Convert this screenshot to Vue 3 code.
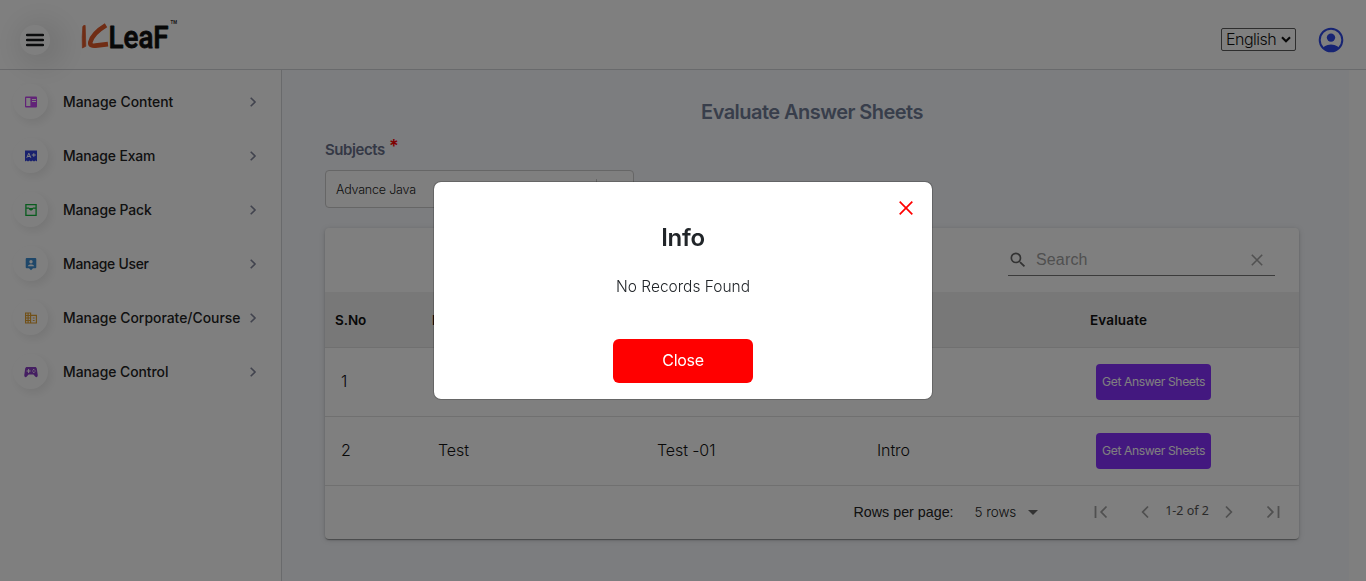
<script setup>
import { ref } from 'vue'

const menu = [
  { label: 'Manage Content', icon: 'content', color: '#c447f0', ls: '0.02px' },
  { label: 'Manage Exam', icon: 'exam', color: '#3243dc', ls: '-0.12px' },
  { label: 'Manage Pack', icon: 'pack', color: '#13b83c', ls: '-0.1px' },
  { label: 'Manage User', icon: 'user', color: '#3f8fd2', ls: '-0.26px' },
  { label: 'Manage Corporate/Course', icon: 'corporate', color: '#e2a02e', ls: '0px' },
  { label: 'Manage Control', icon: 'control', color: '#8b3fc4', ls: '-0.04px' },
]

const rows = [
  { no: 1, name: 'Test', exam: 'Test -01', chapter: 'Intro' },
  { no: 2, name: 'Test', exam: 'Test -01', chapter: 'Intro' },
]

const open = ref(true)
</script>

<template>
  <div class="app">
    <header class="topbar">
      <button class="burger" aria-label="Menu">
        <svg width="18" height="14" viewBox="0 0 18 14"><path d="M1 2h16M1 7h16M1 12h16" stroke="#17191b" stroke-width="2.400" stroke-linecap="round" /></svg>
      </button>
      <svg class="logo" width="100" height="40" viewBox="0 0 100 40">
        <path d="M3.800 11.500Q4.600 10.200 6.200 10.400L6.800 31.300L3.400 33Q2.800 22 3.800 11.500Z" fill="#e05a2b" stroke="#e05a2b" stroke-width=".7" />
        <path d="M27 10.300C20 14.500 13 20.500 11.300 27.300C10.800 30.300 13.500 31 16.500 30.600L29 29.100" fill="none" stroke="#e05a2b" stroke-width="4.600" />
        <text class="logo-text" x="29.600" y="33" textLength="60" lengthAdjust="spacingAndGlyphs">LeaF</text>
        <text class="logo-tm" x="91.500" y="9" textLength="6.500" lengthAdjust="spacingAndGlyphs">TM</text>
      </svg>
      <div class="lang">
        <span>English</span>
        <svg width="10" height="7" viewBox="0 0 10 7"><path d="M1 1.200l4 4 4-4" fill="none" stroke="#111" stroke-width="2.100" /></svg>
      </div>
      <svg class="avatar" width="26" height="26" viewBox="0 0 26 26">
        <defs><clipPath id="face"><circle cx="13" cy="13" r="11.500" /></clipPath></defs>
        <g fill="#2f49e6">
          <circle cx="13" cy="10.600" r="4.200" />
          <ellipse cx="13" cy="24" rx="9" ry="6.600" clip-path="url(#face)" />
        </g>
        <circle cx="13" cy="13" r="11.300" fill="none" stroke="#2f49e6" stroke-width="2" />
      </svg>
    </header>

    <div class="body">
      <nav class="side">
        <a v-for="m in menu" :key="m.label" class="item">
          <span class="bubble">
            <svg width="14" height="14" viewBox="0 0 14 14" :style="{ color: m.color }">
              <g v-if="m.icon === 'content'">
                <path fill="currentColor" fill-rule="evenodd" d="M2 1.500h10a1 1 0 0 1 1 1v9a1 1 0 0 1-1 1H2a1 1 0 0 1-1-1v-9a1 1 0 0 1 1-1zM2.200 3v8h4.200V3zM8 4v1h4V4zM8 6v1h4V6z" />
              </g>
              <g v-else-if="m.icon === 'exam'">
                <path fill="currentColor" d="M1 1.500h12v11l-1.500-1-1.500 1-1.500-1-1.500 1-1.500-1-1.500 1-1.500-1-1.500 1z" />
                <path fill="none" stroke="#fff" d="M2.800 8.800l2-4.600 2 4.600M3.500 7.500h2.700M7.800 6h4M9.800 4.200v3.600" />
              </g>
              <g v-else-if="m.icon === 'pack'" fill="none" stroke="currentColor" stroke-width="1.300">
                <path d="M1.900 1.700h10.200v10.700H1.900z" />
                <path d="M2 5.200h3.200M8.800 5.200H12" />
                <path fill="currentColor" stroke="none" d="M5 5h4v1.400L7 7.800 5 6.400z" />
              </g>
              <g v-else-if="m.icon === 'user'">
                <path fill="currentColor" fill-rule="evenodd" d="M2.700 1h8.600a1 1 0 0 1 1 1v8.300a1 1 0 0 1-1 1H9l-2 2-2-2H2.700a1 1 0 0 1-1-1V2a1 1 0 0 1 1-1zM7 3a1.700 1.700 0 1 0 0 3.400A1.700 1.700 0 0 0 7 3zM3.800 9.300h6.400C9.800 6.900 4.200 6.900 3.800 9.300z" />
              </g>
              <g v-else-if="m.icon === 'corporate'" fill="none" stroke="currentColor" stroke-width="1.150">
                <path d="M1.600 2h5v10h-5zM6.600 4.400h5.800V12H6.600M1.600 4.500h5M1.600 7h5M1.600 9.500h5M4.100 2v10M8.800 7h1.800M8.800 9.500h1.800" />
              </g>
              <g v-else>
                <path fill="currentColor" d="M3 2h8c1 0 1.600.6 1.800 1.500l.9 6.200c.3 2.600-1.500 3-2.500 1.800L9.400 9.600H4.600l-1.800 1.900C1.800 12.700 0 12.300.3 9.700l.9-6.200C1.400 2.600 2 2 3 2z" />
                <path stroke="#fff" stroke-width="1" d="M2.600 6h4M4.600 4v4" />
                <path fill="#fff" d="M9.200 4h1.100v1.100H9.200zM8.200 5.500h1.100v1.100H8.200zM10.500 5.500h1.100v1.100h-1.100zM9.300 7h1.100v1.100H9.300z" />
              </g>
            </svg>
          </span>
          <span class="label" :style="{ letterSpacing: m.ls }">{{ m.label }}</span>
          <svg class="chev" width="8" height="12" viewBox="0 0 8 12"><path d="M1.700 1.700L6 6l-4.300 4.300" fill="none" stroke="#83879c" stroke-width="1.600" /></svg>
        </a>
      </nav>

      <main class="main">
        <h1 class="title">Evaluate Answer Sheets</h1>
        <label class="field-label">Subjects <sup>*</sup></label>
        <div class="select">
          <span>Advance Java</span>
          <i class="divider"></i>
        </div>

        <section class="card">
          <div class="toolbar">
            <div class="search">
              <svg width="20" height="20" viewBox="0 0 24 24"><path fill="#666" d="M15.500 14h-.79l-.28-.27A6.470 6.470 0 0 0 16 9.500 6.500 6.500 0 1 0 9.500 16c1.610 0 3.090-.59 4.230-1.570l.27.280v.79l5 4.990L20.490 19l-4.990-5zm-6 0C7.010 14 5 11.990 5 9.500S7.010 5 9.500 5 14 7.010 14 9.500 11.990 14 9.500 14z" /></svg>
              <span class="ph">Search</span>
              <svg width="12" height="12" viewBox="0 0 12 12"><path d="M.8.8l10.400 10.400M11.200.8L.8 11.200" stroke="#a2a2a2" stroke-width="1.600" /></svg>
            </div>
          </div>
          <div class="row head">
            <span>S.No</span><span>Exam Name</span><span>Test Name</span><span>Chapter</span><span class="wide">Evaluate</span>
          </div>
          <div v-for="r in rows" :key="r.no" class="row">
            <span>{{ r.no }}</span>
            <span>{{ r.name }}</span>
            <span>{{ r.exam }}</span>
            <span>{{ r.chapter }}</span>
            <button class="get">Get Answer Sheets</button>
          </div>
          <footer class="pager">
            <span class="rpp">Rows per page:</span>
            <span class="count">5 rows</span>
            <svg class="caret" width="10" height="5" viewBox="0 0 10 5"><path d="M0 0h10L5 5z" fill="#666" /></svg>
            <svg class="first" width="14" height="14" viewBox="0 0 14 14"><path d="M1.500 1v12M12.500 1.500L7.200 7l5.300 5.500" fill="none" stroke="#a0a0a0" stroke-width="1.800" /></svg>
            <svg class="prev" width="8" height="14" viewBox="0 0 8 14"><path d="M7 1.500L1.700 7 7 12.500" fill="none" stroke="#a0a0a0" stroke-width="1.800" /></svg>
            <span class="range">1-2 of 2</span>
            <svg class="next" width="8" height="14" viewBox="0 0 8 14"><path d="M1 1.500L6.300 7 1 12.500" fill="none" stroke="#a0a0a0" stroke-width="1.800" /></svg>
            <svg class="last" width="14" height="14" viewBox="0 0 14 14"><path d="M12.500 1v12M1.500 1.500L6.800 7 1.500 12.500" fill="none" stroke="#a0a0a0" stroke-width="1.800" /></svg>
          </footer>
        </section>
      </main>
    </div>

    <div v-if="open" class="overlay">
      <div class="modal" role="dialog">
        <button class="x" aria-label="Close dialog" @click="open = false">
          <svg width="14" height="14" viewBox="0 0 14 14"><path d="M.7.7l12.600 12.600M13.300.7L.7 13.300" stroke="#f00" stroke-width="1.700" /></svg>
        </button>
        <h2>Info</h2>
        <p>No Records Found</p>
        <button class="close" @click="open = false">Close</button>
      </div>
    </div>
  </div>
</template>

<style>
body { overflow: hidden; }
</style>

<style scoped>
* { box-sizing: border-box; }
button { border: 0; padding: 0; font-family: inherit; cursor: pointer; }
svg { display: block; flex: none; }
.app { height: 581px; display: flex; flex-direction: column; background: #fff; font-family: Inter, "Open Sans", sans-serif; color: #111; overflow: hidden; }

.topbar { height: 70px; flex: none; display: flex; align-items: center; border-bottom: 1px solid #d3d4d8; padding: 10px 22px 0 20px; }
.burger { width: 30px; height: 30px; border-radius: 50%; background: #fff; display: flex; align-items: center; justify-content: center; box-shadow: 6px 4px 30px 8px rgba(0, 0, 0, .11); }
.logo { margin: -10px 0 0 29px; overflow: visible; }
.logo-text { font: 500 32px/1.2 Roboto, sans-serif; fill: #111; stroke: #111; stroke-width: .9; stroke-linejoin: round; }
.logo-tm { font: 700 6px Roboto, sans-serif; fill: #333; }
.lang { margin-left: auto; width: 75px; height: 23px; border: 1px solid #5c5c5c; border-radius: 2px; display: flex; align-items: center; justify-content: space-between; padding: 0 4px; font-size: 16px; font-weight: 300; letter-spacing: -.5px; }
.lang span { margin-top: -1px; }
.avatar { margin-left: 22px; }

.body { flex: 1; display: flex; min-height: 0; }
.side { width: 282px; flex: none; border-right: 1px solid #d3d4d8; padding: 5px 24px 0 13px; }
.item { height: 54px; display: flex; align-items: center; }
.bubble { width: 35px; height: 35px; margin-top: -1px; border-radius: 50%; background: #fff; display: flex; align-items: center; justify-content: center; box-shadow: 3px 4px 10px rgba(0, 0, 0, .08); }
.label { margin: 0 0 0 15px; font-size: 13.900px; line-height: 18px; font-weight: 500; color: #222; white-space: nowrap; }
.chev { margin-left: auto; }

.main { width: 1067px; flex: none; background: #f8fafe; padding: 30px 50px 0 43px; }
.title { margin: 0; width: 974px; text-align: center; font-size: 20px; line-height: 25px; font-weight: 600; color: #717d97; letter-spacing: -.54px; }
.field-label { display: flex; margin-top: 15px; height: 20px; line-height: 20px; font-size: 15px; font-weight: 600; letter-spacing: -.42px; color: #68708a; }
.field-label sup { color: #f00; font-size: 18px; line-height: 14px; margin-left: 4px; }
.select { margin-top: 10px; width: 309px; height: 38px; background: #fff; border: 1px solid #ccc; border-radius: 4px; padding: 0 36px 0 10px; display: flex; align-items: center; justify-content: space-between; font-size: 12.500px; font-weight: 300; letter-spacing: -.2px; color: #222; }
.divider { width: 1px; height: 20px; background: #ccc; }

.card { margin-top: 20px; width: 974px; height: 311px; background: #fff; border-radius: 4px; box-shadow: 0 2px 1px -1px rgba(0, 0, 0, .2), 0 1px 1px rgba(0, 0, 0, .14), 0 1px 3px rgba(0, 0, 0, .12), 0 1px 6px rgba(0, 0, 0, .12); }
.toolbar { height: 64px; display: flex; justify-content: flex-end; padding: 16px 24px 0 0; }
.search { width: 267px; height: 32px; border-bottom: 1px solid #777; display: flex; align-items: center; padding: 0 12px 0 0; }
.ph { flex: 1; margin-left: 8px; font: 300 16px "Liberation Sans", sans-serif; letter-spacing: .15px; color: #a0a0a0; }
.row { height: 69px; border-bottom: 1px solid #e0e0e0; display: grid; grid-template-columns: 97px 219px 220px 219px 1fr; align-items: center; padding-left: 16px; font-size: 16px; font-weight: 300; letter-spacing: -.1px; }
.row > span { margin-top: -2px; }
.head { height: 56px; background: #f0f0f0; padding-left: 10px; font-size: 13.500px; font-weight: 600; letter-spacing: -.1px; }
.head > span { margin-top: 0; }
.head > .wide { letter-spacing: .15px; }
.get { width: 115px; height: 36px; border-radius: 4px; background: #8730ff; color: #fff; font-size: 12.200px; letter-spacing: -.42px; padding-bottom: 1px; white-space: nowrap; }
.pager { height: 53px; display: flex; align-items: center; padding: 0 19px 1px 0; justify-content: flex-end; font-size: 14px; color: #222; }
.rpp { font: 14.300px "Liberation Sans", sans-serif; }
.count { margin-left: 21px; font-weight: 300; font-size: 13.500px; letter-spacing: -.1px; }
.caret { margin: 1px 0 0 12px; }
.first { margin-left: 56px; }
.prev { margin-left: 33px; }
.range { margin: -3px 0 0 16px; font: 12.500px "Noto Sans", sans-serif; color: #555; }
.next { margin-left: 16px; }
.last { margin-left: 33px; }

.overlay { position: fixed; inset: 0; background: rgba(0, 0, 0, .5); display: flex; justify-content: center; align-items: flex-start; padding-top: 181px; }
.modal { position: relative; width: 500px; height: 219px; background: #fff; background-clip: padding-box; border: 1px solid rgba(0, 0, 0, .2); border-radius: 8px; display: flex; flex-direction: column; align-items: center; color: #212529; }
.x { position: absolute; right: 19px; top: 19px; background: none; }
h2 { margin: 41px 0 0; font-size: 24px; line-height: 30px; font-weight: 600; letter-spacing: -.3px; }
p { margin: 22px 0 0; font-size: 15.500px; line-height: 24px; font-weight: 300; }
.close { margin-top: 40px; width: 140px; height: 44px; border-radius: 6px; background: #f00; color: #fff; font-size: 16px; letter-spacing: -.3px; padding-bottom: 2px; }
</style>
